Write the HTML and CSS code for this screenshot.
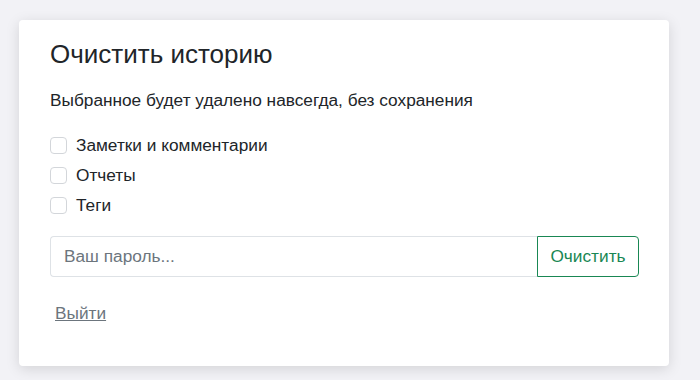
FILE: index.html
```html
<!DOCTYPE html>
<html>
	<head>
		<meta charset="UTF-8">
		<title>Очистить историю</title>
		<link rel="stylesheet" href="styles.css">
	</head>
	<body>
		<div class="card">
			<h3 class="title">Очистить историю</h3>
			<p class="lead">Выбранное будет удалено навсегда, без сохранения</p>
			<ul class="options">
				<li><label><input type="checkbox" class="check"><span>Заметки и комментарии</span></label></li>
				<li><label><input type="checkbox" class="check"><span>Отчеты</span></label></li>
				<li><label><input type="checkbox" class="check"><span>Теги</span></label></li>
			</ul>
			<div class="input-group">
				<input type="password" class="field" placeholder="Ваш пароль...">
				<button class="btn-clear">Очистить</button>
			</div>
			<a href="#" class="logout">Выйти</a>
		</div>
	</body>
</html>
```

FILE: styles.css
```css
body, ul, p, h3 {
	margin: 0;
	padding: 0;
}

body {
	background-color: #f2f2f6;
	font-family: "Liberation Sans", Arial, sans-serif;
	font-size: 17.25px;
	color: #212529;
	padding: 20px 19px;
}

.card {
	width: 650px;
	box-sizing: border-box;
	padding: 18px 30px 40px 31px;
	background-color: #fff;
	border-radius: 4px;
	box-shadow: 0 3px 14px rgba(0, 0, 0, 0.13);
}

.title {
	font-size: 26px;
	font-weight: normal;
	line-height: 32px;
}

.lead {
	margin-top: 17px;
	line-height: 26px;
}

.options {
	list-style: none;
	margin-top: 17px;
}

.options li {
	height: 30px;
	display: flex;
	align-items: center;
}

.options label {
	display: flex;
	align-items: center;
	gap: 9px;
}

.check {
	appearance: none;
	width: 17px;
	height: 17px;
	margin: 0;
	border: 1px solid #d3d6da;
	border-radius: 4px;
	background: #fff;
}

.input-group {
	display: flex;
	margin-top: 16px;
	height: 41px;
}

.field {
	flex: 1;
	margin: 0;
	padding: 0 13px;
	border: 1px solid #dee2e6;
	border-right: none;
	border-radius: 4px 0 0 4px;
	font: inherit;
	color: #212529;
}

.field::placeholder {
	color: #6c757d;
}

.btn-clear {
	width: 102px;
	margin: 0;
	padding: 0;
	border: 1px solid #198754;
	border-radius: 0 4px 4px 0;
	background: #fff;
	color: #198754;
	font: inherit;
}

.logout {
	display: inline-block;
	margin-top: 23px;
	margin-left: 5px;
	color: #6c757d;
	line-height: 26px;
}
```
